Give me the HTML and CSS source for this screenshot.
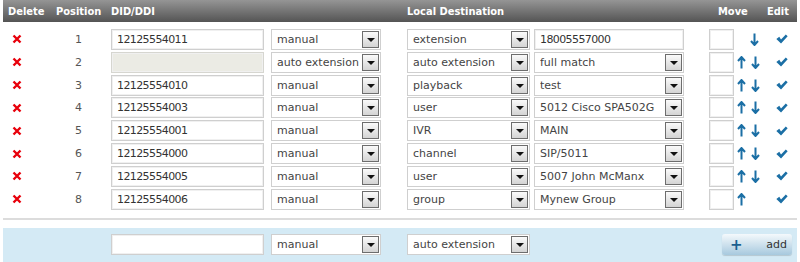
FILE: index.html
```html
<!DOCTYPE html>
<html lang="en">
<head>
  <meta charset="UTF-8" />
  <title>DID Routing</title>
  <link rel="stylesheet" href="styles.css">
</head>
<body>
  <div class="did-table">
    <div class="row head">
      <span class="c-del">Delete</span>
      <span class="c-pos">Position</span>
      <span class="c-did">DID/DDI</span>
      <span class="c-type"></span>
      <span class="c-dest">Local Destination</span>
      <span class="c-move">Move</span>
      <span class="c-edit">Edit</span>
    </div>

    <div class="rows">
      <div class="row">
        <span class="c-del"><svg class="ico-del" viewBox="0 0 10 10"><path d="M1.5 1.5 8.5 8.5M8.5 1.5 1.5 8.5"/></svg></span>
        <span class="c-pos">1</span>
        <span class="c-did"><input class="txt" value="12125554011"></span>
        <span class="c-type"><span class="dd w-type"><select><option>manual</option></select></span></span>
        <span class="c-dtype"><span class="dd w-dtype"><select><option>extension</option></select></span></span>
        <span class="c-val"><input class="txt w-val" value="18005557000"></span>
        <span class="c-pri"><input class="txt w-pri"></span>
        <span class="c-arr"><i class="blank"></i><svg class="ico-arr" viewBox="0 0 9 13"><path d="M4.5 0.5v11M1 8l3.5 4 3.5-4"/></svg></span>
        <span class="c-edit"><svg class="ico-ok" viewBox="0 0 11 9"><path d="M0.3 4.6 3 2.4 4.6 5 9 0.3 10.7 2 4.6 8.7z"/></svg></span>
      </div>

      <div class="row">
        <span class="c-del"><svg class="ico-del" viewBox="0 0 10 10"><path d="M1.5 1.5 8.5 8.5M8.5 1.5 1.5 8.5"/></svg></span>
        <span class="c-pos">2</span>
        <span class="c-did"><input class="txt" disabled></span>
        <span class="c-type"><span class="dd w-type"><select><option>auto extension</option></select></span></span>
        <span class="c-dtype"><span class="dd w-dtype"><select><option>auto extension</option></select></span></span>
        <span class="c-val"><span class="dd w-val"><select><option>full match</option></select></span></span>
        <span class="c-pri"><input class="txt w-pri"></span>
        <span class="c-arr"><svg class="ico-arr" viewBox="0 0 9 13"><path d="M4.5 12.5v-11M1 5l3.5-4 3.5 4"/></svg><svg class="ico-arr" viewBox="0 0 9 13"><path d="M4.5 0.5v11M1 8l3.5 4 3.5-4"/></svg></span>
        <span class="c-edit"><svg class="ico-ok" viewBox="0 0 11 9"><path d="M0.3 4.6 3 2.4 4.6 5 9 0.3 10.7 2 4.6 8.7z"/></svg></span>
      </div>

      <div class="row">
        <span class="c-del"><svg class="ico-del" viewBox="0 0 10 10"><path d="M1.5 1.5 8.5 8.5M8.5 1.5 1.5 8.5"/></svg></span>
        <span class="c-pos">3</span>
        <span class="c-did"><input class="txt" value="12125554010"></span>
        <span class="c-type"><span class="dd w-type"><select><option>manual</option></select></span></span>
        <span class="c-dtype"><span class="dd w-dtype"><select><option>playback</option></select></span></span>
        <span class="c-val"><span class="dd w-val"><select><option>test</option></select></span></span>
        <span class="c-pri"><input class="txt w-pri"></span>
        <span class="c-arr"><svg class="ico-arr" viewBox="0 0 9 13"><path d="M4.5 12.5v-11M1 5l3.5-4 3.5 4"/></svg><svg class="ico-arr" viewBox="0 0 9 13"><path d="M4.5 0.5v11M1 8l3.5 4 3.5-4"/></svg></span>
        <span class="c-edit"><svg class="ico-ok" viewBox="0 0 11 9"><path d="M0.3 4.6 3 2.4 4.6 5 9 0.3 10.7 2 4.6 8.7z"/></svg></span>
      </div>

      <div class="row">
        <span class="c-del"><svg class="ico-del" viewBox="0 0 10 10"><path d="M1.5 1.5 8.5 8.5M8.5 1.5 1.5 8.5"/></svg></span>
        <span class="c-pos">4</span>
        <span class="c-did"><input class="txt" value="12125554003"></span>
        <span class="c-type"><span class="dd w-type"><select><option>manual</option></select></span></span>
        <span class="c-dtype"><span class="dd w-dtype"><select><option>user</option></select></span></span>
        <span class="c-val"><span class="dd w-val"><select><option>5012 Cisco SPA502G</option></select></span></span>
        <span class="c-pri"><input class="txt w-pri"></span>
        <span class="c-arr"><svg class="ico-arr" viewBox="0 0 9 13"><path d="M4.5 12.5v-11M1 5l3.5-4 3.5 4"/></svg><svg class="ico-arr" viewBox="0 0 9 13"><path d="M4.5 0.5v11M1 8l3.5 4 3.5-4"/></svg></span>
        <span class="c-edit"><svg class="ico-ok" viewBox="0 0 11 9"><path d="M0.3 4.6 3 2.4 4.6 5 9 0.3 10.7 2 4.6 8.7z"/></svg></span>
      </div>

      <div class="row">
        <span class="c-del"><svg class="ico-del" viewBox="0 0 10 10"><path d="M1.5 1.5 8.5 8.5M8.5 1.5 1.5 8.5"/></svg></span>
        <span class="c-pos">5</span>
        <span class="c-did"><input class="txt" value="12125554001"></span>
        <span class="c-type"><span class="dd w-type"><select><option>manual</option></select></span></span>
        <span class="c-dtype"><span class="dd w-dtype"><select><option>IVR</option></select></span></span>
        <span class="c-val"><span class="dd w-val"><select><option>MAIN</option></select></span></span>
        <span class="c-pri"><input class="txt w-pri"></span>
        <span class="c-arr"><svg class="ico-arr" viewBox="0 0 9 13"><path d="M4.5 12.5v-11M1 5l3.5-4 3.5 4"/></svg><svg class="ico-arr" viewBox="0 0 9 13"><path d="M4.5 0.5v11M1 8l3.5 4 3.5-4"/></svg></span>
        <span class="c-edit"><svg class="ico-ok" viewBox="0 0 11 9"><path d="M0.3 4.6 3 2.4 4.6 5 9 0.3 10.7 2 4.6 8.7z"/></svg></span>
      </div>

      <div class="row">
        <span class="c-del"><svg class="ico-del" viewBox="0 0 10 10"><path d="M1.5 1.5 8.5 8.5M8.5 1.5 1.5 8.5"/></svg></span>
        <span class="c-pos">6</span>
        <span class="c-did"><input class="txt" value="12125554000"></span>
        <span class="c-type"><span class="dd w-type"><select><option>manual</option></select></span></span>
        <span class="c-dtype"><span class="dd w-dtype"><select><option>channel</option></select></span></span>
        <span class="c-val"><span class="dd w-val"><select><option>SIP/5011</option></select></span></span>
        <span class="c-pri"><input class="txt w-pri"></span>
        <span class="c-arr"><svg class="ico-arr" viewBox="0 0 9 13"><path d="M4.5 12.5v-11M1 5l3.5-4 3.5 4"/></svg><svg class="ico-arr" viewBox="0 0 9 13"><path d="M4.5 0.5v11M1 8l3.5 4 3.5-4"/></svg></span>
        <span class="c-edit"><svg class="ico-ok" viewBox="0 0 11 9"><path d="M0.3 4.6 3 2.4 4.6 5 9 0.3 10.7 2 4.6 8.7z"/></svg></span>
      </div>

      <div class="row">
        <span class="c-del"><svg class="ico-del" viewBox="0 0 10 10"><path d="M1.5 1.5 8.5 8.5M8.5 1.5 1.5 8.5"/></svg></span>
        <span class="c-pos">7</span>
        <span class="c-did"><input class="txt" value="12125554005"></span>
        <span class="c-type"><span class="dd w-type"><select><option>manual</option></select></span></span>
        <span class="c-dtype"><span class="dd w-dtype"><select><option>user</option></select></span></span>
        <span class="c-val"><span class="dd w-val"><select><option>5007 John McManx</option></select></span></span>
        <span class="c-pri"><input class="txt w-pri"></span>
        <span class="c-arr"><svg class="ico-arr" viewBox="0 0 9 13"><path d="M4.5 12.5v-11M1 5l3.5-4 3.5 4"/></svg><svg class="ico-arr" viewBox="0 0 9 13"><path d="M4.5 0.5v11M1 8l3.5 4 3.5-4"/></svg></span>
        <span class="c-edit"><svg class="ico-ok" viewBox="0 0 11 9"><path d="M0.3 4.6 3 2.4 4.6 5 9 0.3 10.7 2 4.6 8.7z"/></svg></span>
      </div>

      <div class="row">
        <span class="c-del"><svg class="ico-del" viewBox="0 0 10 10"><path d="M1.5 1.5 8.5 8.5M8.5 1.5 1.5 8.5"/></svg></span>
        <span class="c-pos">8</span>
        <span class="c-did"><input class="txt" value="12125554006"></span>
        <span class="c-type"><span class="dd w-type"><select><option>manual</option></select></span></span>
        <span class="c-dtype"><span class="dd w-dtype"><select><option>group</option></select></span></span>
        <span class="c-val"><span class="dd w-val"><select><option>Mynew Group</option></select></span></span>
        <span class="c-pri"><input class="txt w-pri"></span>
        <span class="c-arr"><svg class="ico-arr" viewBox="0 0 9 13"><path d="M4.5 12.5v-11M1 5l3.5-4 3.5 4"/></svg></span>
        <span class="c-edit"><svg class="ico-ok" viewBox="0 0 11 9"><path d="M0.3 4.6 3 2.4 4.6 5 9 0.3 10.7 2 4.6 8.7z"/></svg></span>
      </div>
    </div>

    <hr class="sep">

    <div class="row add-row">
      <span class="c-del"></span>
      <span class="c-pos"></span>
      <span class="c-did"><input class="txt"></span>
      <span class="c-type"><span class="dd w-type"><select><option>manual</option></select></span></span>
      <span class="c-dtype"><span class="dd w-dtype"><select><option>auto extension</option></select></span></span>
      <span class="c-val"></span>
      <span class="c-add"><button class="btn-add"><b>+</b> add</button></span>
    </div>
  </div>
</body>
</html>
```

FILE: styles.css
```css
body {
  margin: 0;
  font-family: "DejaVu Sans", Verdana, sans-serif;
  font-size: 11px;
  color: #333;
  background: #fff;
}

.did-table {
  padding: 0 3px;
}

.row {
  display: grid;
  grid-template-columns: 49px 59px 160px 136px 127px 175px 26px 29px 33px;
  align-items: center;
  height: 22.85px;
}

.row > span {
  display: flex;
  align-items: center;
}

/* header bar */
.head {
  height: 22px;
  background: linear-gradient(#959595, #545454);
  color: #fff;
  font-family: "DejaVu Sans Condensed", "DejaVu Sans", sans-serif;
  font-weight: bold;
  font-size: 11px;
}

.head .c-del { padding-left: 5px; }
.head .c-pos { padding-left: 4px; }
.head .c-dest { grid-column: 5 / 7; }
.head .c-move { grid-column: 7 / 9; padding-left: 9px; }
.head .c-edit { padding-left: 3px; }

.rows {
  padding-top: 6px;
}

.c-del svg { margin-left: 9px; }

.ico-del {
  width: 10px;
  height: 10px;
  fill: none;
  stroke: #e8000b;
  stroke-width: 2.4;
}

.rows .c-pos {
  justify-content: center;
  padding-right: 6px;
  color: #555;
}

/* text fields */
.txt {
  box-sizing: border-box;
  width: 153px;
  height: 21px;
  border: 1px solid #cfcfcf;
  box-shadow: inset 0 0 0 1px #f0f0f0;
  padding: 0 5px;
  font: inherit;
  letter-spacing: -0.6px;
  color: #333;
  background: #fff;
}

.txt:disabled {
  background: #ebebe4;
  border-color: #d6d6d0;
}

.w-val { width: 150px; }
.w-pri { width: 25px; padding: 0; }

/* drop downs */
.dd {
  position: relative;
  display: block;
  box-sizing: border-box;
  height: 21px;
  border: 1px solid #cfcfcf;
  background: #fff;
}

.dd select {
  appearance: none;
  -webkit-appearance: none;
  border: none;
  background: transparent;
  width: 100%;
  height: 100%;
  padding: 0 0 0 5px;
  font: inherit;
  color: #444;
  outline: none;
}

.dd::after {
  content: "";
  position: absolute;
  right: 1px;
  top: 1px;
  width: 15px;
  height: 15px;
  border: 1px solid #6d6d6d;
  background: linear-gradient(#fafafa, #d4d4d4);
  pointer-events: none;
}

.dd::before {
  content: "";
  position: absolute;
  right: 5px;
  top: 8px;
  border-left: 4px solid transparent;
  border-right: 4px solid transparent;
  border-top: 4px solid #111;
  z-index: 1;
  pointer-events: none;
}

.w-type { width: 110px; }
.w-dtype { width: 123px; }
.dd.w-val { width: 150px; }

/* move / edit */
.c-arr {
  padding-left: 2px;
  gap: 5px;
}

.blank {
  width: 8px;
}

.ico-arr {
  width: 9px;
  height: 13px;
  fill: none;
  stroke: #1b6fa5;
  stroke-width: 2;
}

.c-edit svg { margin-left: 12px; }

.ico-ok {
  width: 12px;
  height: 10px;
  fill: #1b6fa5;
}

.sep {
  border: none;
  height: 2px;
  background: #dcdcdc;
  margin: 7px 0 8px;
}

/* new entry row */
.add-row {
  background: #d4eaf5;
  height: 34px;
  grid-template-columns: 49px 59px 160px 136px 127px 188px 75px;
  padding-bottom: 2px;
}

.btn-add {
  box-sizing: border-box;
  width: 70px;
  height: 21px;
  border: none;
  border-radius: 3px;
  background: linear-gradient(#f4f9fc, #a7c9de);
  box-shadow: 0 1px 1px rgba(0, 0, 0, 0.15);
  font: inherit;
  color: #333;
  display: flex;
  justify-content: space-between;
  align-items: center;
  padding: 0 5px 0 8px;
}

.btn-add b {
  color: #1b5f8f;
  font-size: 15px;
}
```
